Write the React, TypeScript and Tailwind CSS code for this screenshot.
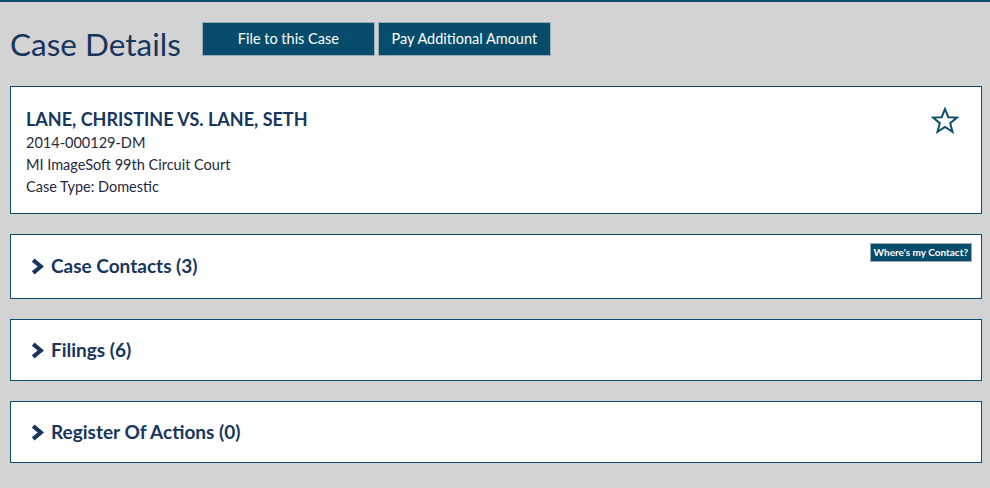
import React from "react";

const font = { fontFamily: "Lato, 'Open Sans', sans-serif" };

function Chevron() {
  return (
    <svg width="14" height="17" viewBox="0 0 14 17" className="shrink-0">
      <path d="M3.2 2.2 L10.8 8.5 L3.2 14.8" fill="none" stroke="#17365d" strokeWidth="4.2" strokeLinejoin="miter" />
    </svg>
  );
}

function Section({ title, badge, h }: { title: string; badge?: boolean; h: string }) {
  return (
    <div className={`relative bg-white border border-[#0b4f6c] ${h} flex items-center pl-[19px]`}>
      <Chevron />
      <span className="ml-[7px] text-[19px] font-bold text-[#17365d]">{title}</span>
      {badge && (
        <span className="absolute right-[9px] top-[8px] bg-[#074c6b] text-white text-[10px] font-bold leading-[17px] px-[3px] border border-[#9aa9b3]">
          Where's my Contact?
        </span>
      )}
    </div>
  );
}

export default function App() {
  return (
    <div style={font} className="w-[990px] h-[488px] bg-[#d3d3d3] border-t-2 border-[#0b4f6c] overflow-hidden">
      <div className="pl-[10px] pr-[8px]">
        <div className="flex items-center h-[84px]">
          <h1 className="text-[31.5px] text-[#17365d] leading-none mr-[21px] mt-[2px]">Case Details</h1>
          <div className="flex gap-[3px] -mt-[11px]">
            <button className="w-[173px] h-[34px] bg-[#074c6b] text-white text-[14.5px] border border-[#9aa9b3]">File to this Case</button>
            <button className="w-[173px] h-[34px] bg-[#074c6b] text-white text-[14.5px] border border-[#9aa9b3]">Pay Additional Amount</button>
          </div>
        </div>
        <div className="flex flex-col gap-[20px]">
          <div className="relative bg-white border border-[#0b4f6c] h-[128px] pt-[19px] pl-[15px]">
            <div className="text-[18px] font-bold text-[#17365d] leading-[26px]">LANE, CHRISTINE VS. LANE, SETH</div>
            <div className="text-[14.5px] text-[#26293d] leading-[22px]">2014-000129-DM</div>
            <div className="text-[14.5px] text-[#26293d] leading-[22px]">MI ImageSoft 99th Circuit Court</div>
            <div className="text-[14.5px] text-[#26293d] leading-[22px]">Case Type: Domestic</div>
            <svg className="absolute right-[22px] top-[20px]" width="28" height="27" viewBox="0 0 28 27">
              <path d="M14 2 L17.3 10.2 L26 10.6 L19.2 16.2 L21.5 24.8 L14 20 L6.5 24.8 L8.8 16.2 L2 10.6 L10.7 10.2 Z" fill="none" stroke="#0b4f6c" strokeWidth="2" strokeLinejoin="miter" />
            </svg>
          </div>
          <Section title="Case Contacts (3)" badge h="h-[65px]" />
          <Section title="Filings (6)" h="h-[62px]" />
          <Section title="Register Of Actions (0)" h="h-[62px]" />
        </div>
      </div>
    </div>
  );
}
